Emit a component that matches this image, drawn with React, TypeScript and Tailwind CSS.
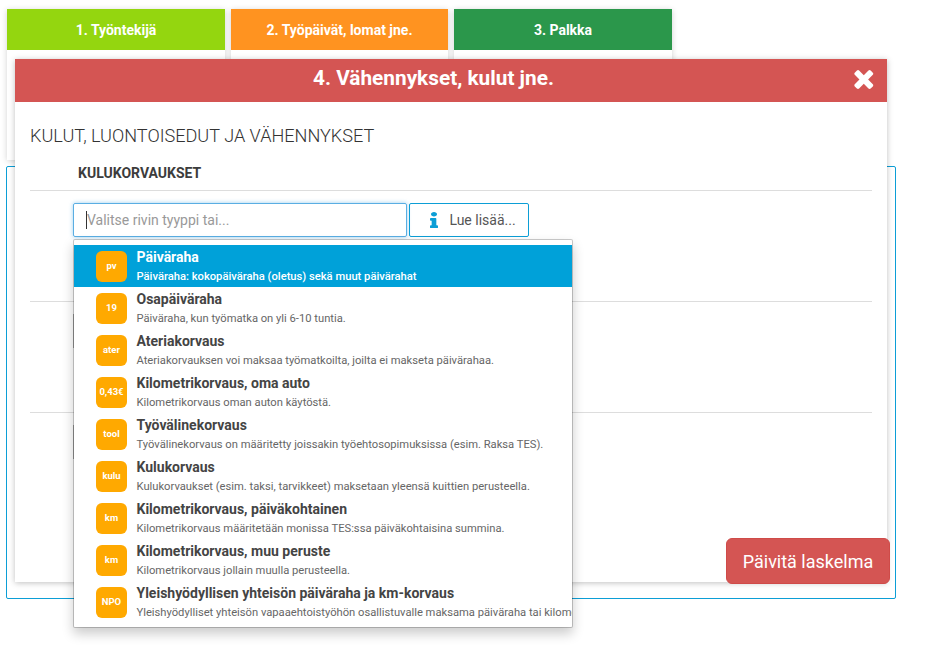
import { FaInfo } from "react-icons/fa";

const rows = [
  { tag: "pv", title: "Päiväraha", desc: "Päiväraha: kokopäiväraha (oletus) sekä muut päivärahat" },
  { tag: "19", title: "Osapäiväraha", desc: "Päiväraha, kun työmatka on yli 6-10 tuntia." },
  { tag: "ater", title: "Ateriakorvaus", desc: "Ateriakorvauksen voi maksaa työmatkoilta, joilta ei makseta päivärahaa." },
  { tag: "0,43€", title: "Kilometrikorvaus, oma auto", desc: "Kilometrikorvaus oman auton käytöstä." },
  { tag: "tool", title: "Työvälinekorvaus", desc: "Työvälinekorvaus on määritetty joissakin työehtosopimuksissa (esim. Raksa TES)." },
  { tag: "kulu", title: "Kulukorvaus", desc: "Kulukorvaukset (esim. taksi, tarvikkeet) maksetaan yleensä kuittien perusteella." },
  { tag: "km", title: "Kilometrikorvaus, päiväkohtainen", desc: "Kilometrikorvaus määritetään monissa TES:ssa päiväkohtaisina summina." },
  { tag: "km", title: "Kilometrikorvaus, muu peruste", desc: "Kilometrikorvaus jollain muulla perusteella." },
  { tag: "NPO", title: "Yleishyödyllisen yhteisön päiväraha ja km-korvaus", desc: "Yleishyödylliset yhteisön vapaaehtoistyöhön osallistuvalle maksama päiväraha tai kilometrikorvaus." },
];

function Tab({ label, color, width }: { label: string; color: string; width: string }) {
  return (
    <div className={`h-[151px] bg-white shadow-[0_1px_6px_rgba(0,0,0,0.18)] ${width}`}>
      <div className={`h-[41px] flex items-center justify-center text-white text-sm font-bold ${color}`}>{label}</div>
    </div>
  );
}

export default function App() {
  return (
    <div className="relative w-[945px] h-[655px] bg-white overflow-hidden font-['Roboto',sans-serif] text-[#333]">
      {/* Steps behind the modal */}
      <div className="flex gap-[6px] pl-[7px] pt-[9px]">
        <Tab label="1. Työntekijä" color="bg-[#94d60f]" width="w-[218px]" />
        <Tab label="2. Työpäivät, lomat jne." color="bg-[#ff9320]" width="w-[217px]" />
        <Tab label="3. Palkka" color="bg-[#2b974b]" width="w-[218px]" />
      </div>
      <div className="ml-[6px] mt-[6px] w-[890px] h-[433px] border border-[#0c9ed6] rounded-[2px]" />

      {/* Modal */}
      <div className="absolute left-[15px] top-[59px] w-[872px] h-[523px] bg-white shadow-[0_1px_6px_rgba(0,0,0,0.25)]">
        <div className="relative h-[43px] bg-[#d45553] flex items-center justify-center pr-[35px] pb-[3px] text-white text-[20.8px] font-bold">
          4. Vähennykset, kulut jne.
          <svg viewBox="74 238 1224 1316" className="absolute right-[13px] top-[9px] w-[21px] h-[21px] fill-white">
            <path d="M1298 1322q0 40-28 68l-136 136q-28 28-68 28t-68-28l-294-294-294 294q-28 28-68 28t-68-28l-136-136q-28-28-28-68t28-68l294-294-294-294q-28-28-28-68t28-68l136-136q28-28 68-28t68 28l294 294 294-294q28-28 68-28t68 28l136 136q28 28 28 68t-28 68l-294 294 294 294q28 28 28 68z" />
          </svg>
        </div>
        <div className="px-[15px]">
          <h2 className="mt-[23px] text-[18.1px] leading-[22px] font-light text-[#333]">KULUT, LUONTOISEDUT JA VÄHENNYKSET</h2>
          <div className="mt-[16px] pl-[48px] h-[21px] text-[14px] leading-[21px] font-bold text-[#3c3c3c]">KULUKORVAUKSET</div>
          <div className="mt-[6px] border-t border-[#ddd] h-[111px] pl-[43px] pt-[12px] flex gap-[2px]">
            <div className="w-[334px] h-[34px] border border-[#5aaee3] shadow-[0_0_4px_rgba(90,174,227,0.6)] rounded-[2px] pl-[12px] flex items-center text-[14px] text-[#999]">
              <span className="w-px h-[18px] bg-[#333]" />
              Valitse rivin tyyppi tai...
            </div>
            <div className="w-[120px] h-[34px] border border-[#0c9ed6] rounded-[2px] flex items-center justify-center gap-[11px] pl-[8px] text-[14px] text-[#555]">
              <FaInfo preserveAspectRatio="none" className="text-[#0c9ed6] w-[8px] h-[16px]" />
              Lue lisää...
            </div>
          </div>
          <div className="border-t border-[#ddd] h-[111px] pl-[43px] pt-[12px]">
            <div className="w-[300px] h-[34px] border-l border-[#aaa]" />
          </div>
          <div className="border-t border-[#ddd] pl-[43px] pt-[12px]">
            <div className="w-[300px] h-[34px] border-l border-[#aaa]" />
          </div>
        </div>
      </div>

      {/* Type dropdown */}
      <div className="absolute left-[73px] top-[239px] w-[500px] h-[389px] bg-white bg-clip-padding border border-[rgba(0,0,0,0.2)] rounded-[2px] shadow-[0_6px_12px_rgba(0,0,0,0.2)] pt-[5px] overflow-hidden">
        {rows.map((row, i) => (
          <div key={i} className={`h-[42px] flex items-start pl-[22px] whitespace-nowrap ${i === 0 ? "bg-[#00a1d9] text-white" : "text-[#444]"}`}>
            <div className="mt-[6px] w-[31px] h-[31px] shrink-0 rounded-[6px] bg-[#ffa900] flex items-center justify-center text-white text-[9.5px] font-bold">{row.tag}</div>
            <div className="ml-[9.5px]">
              <div className="text-[14px] leading-[18px] mt-[3px] font-bold">{row.title}</div>
              <div className={`text-[11.2px] leading-[15px] mt-[3px] ${i === 0 ? "font-medium" : "text-[#666]"}`}>{row.desc}</div>
            </div>
          </div>
        ))}
      </div>

      <button className="absolute left-[726px] top-[538px] w-[164px] h-[46px] rounded-[6px] bg-[#d45553] border border-[#cf4b49] text-white text-[18px] flex items-center justify-center">
        Päivitä laskelma
      </button>
    </div>
  );
}
